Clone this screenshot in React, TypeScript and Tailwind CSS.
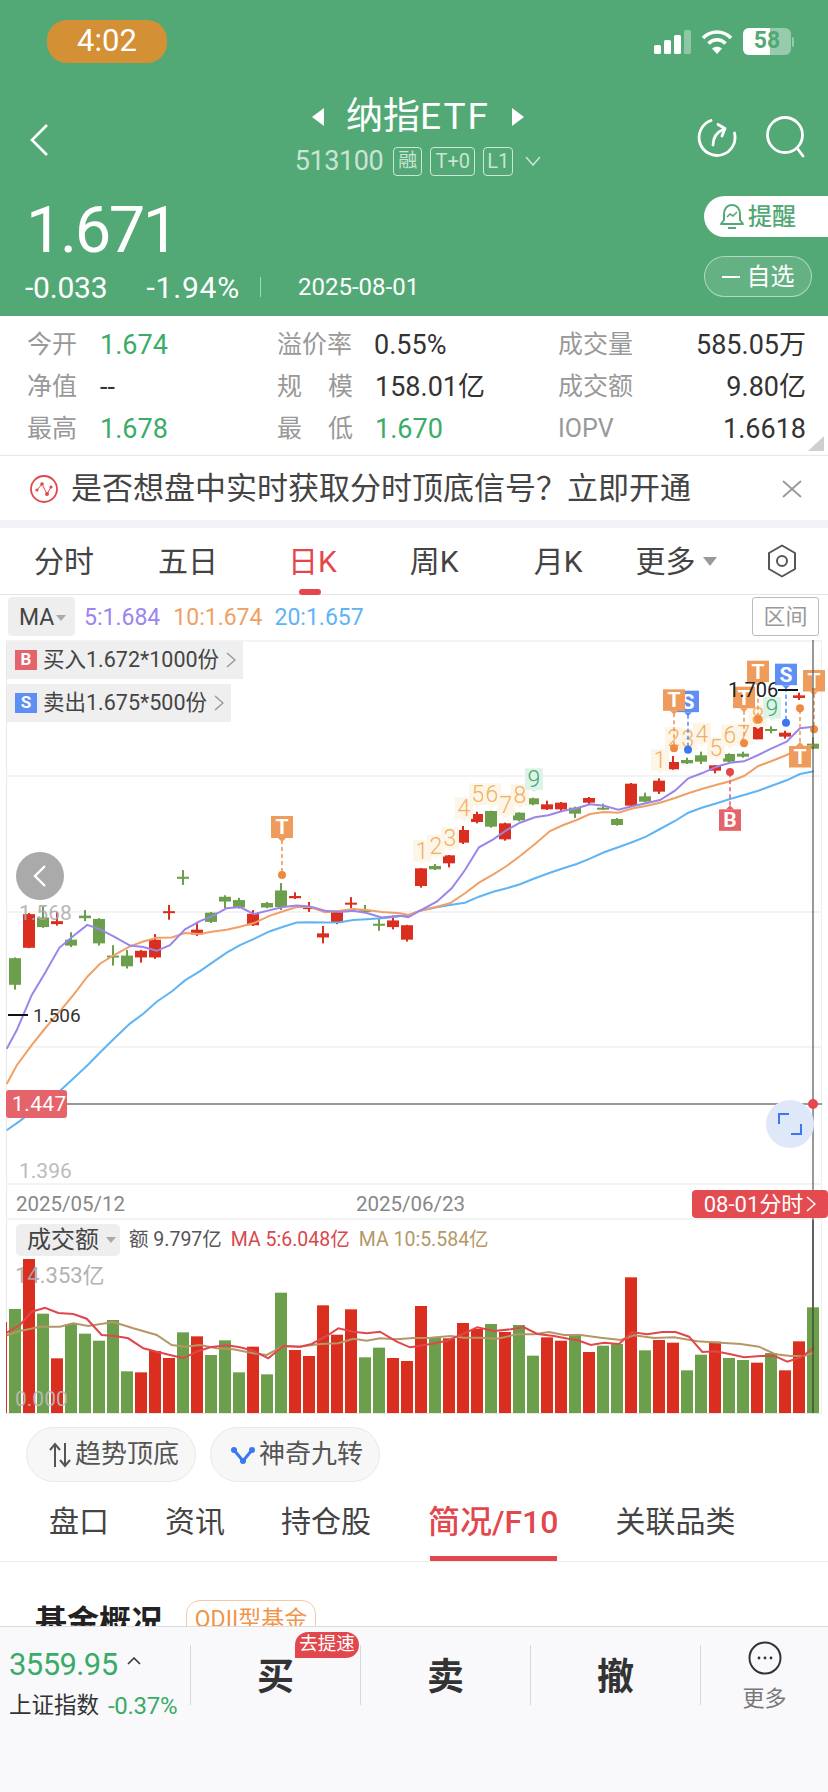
import React from "react";

const RED = "#da2e1f";
const GREEN = "#6c9f4b";

// zoomed-crop readings -> page coordinates
const leftX = (x: number) => x / 3;
const leftY = (y: number) => 640 + y / 2.703;
const rightX = (x: number) => 400 + x / 3;
const rightY = (y: number) => 640 + y / 3;
const line = (pts: number[][]) => pts.map((p) => p[0].toFixed(1) + "," + p[1].toFixed(1)).join(" ");

// [bodyTop, bodyBottom, wickTop, wickBottom, isRed]
const leftCandles: number[][] = [
  [860, 932, 858, 945, 0], [741, 832, 738, 833, 1], [750, 776, 720, 778, 0], [760, 768, 735, 772, 1],
  [810, 826, 790, 830, 0], [745, 752, 730, 760, 0], [754, 820, 752, 826, 0], [853, 858, 825, 880, 0],
  [853, 882, 838, 888, 0], [840, 858, 838, 872, 1], [810, 858, 795, 862, 1], [733, 737, 716, 756, 1],
  [640, 645, 622, 662, 0], [783, 796, 762, 800, 1], [737, 762, 735, 765, 0], [694, 707, 690, 725, 0],
  [703, 723, 697, 726, 0], [740, 771, 730, 773, 1], [711, 723, 708, 725, 0], [677, 722, 657, 730, 0],
  [692, 698, 682, 700, 1], [722, 727, 708, 735, 1], [793, 804, 773, 820, 1], [735, 765, 730, 768, 1],
  [710, 714, 695, 725, 1], [730, 735, 716, 738, 0], [767, 772, 752, 786, 0], [758, 776, 745, 782, 1],
  [771, 810, 770, 815, 1],
];
const rightCandles: number[][] = [
  [685, 738, 684, 743, 1], [678, 688, 672, 690, 0], [646, 670, 645, 682, 1], [570, 608, 558, 612, 1],
  [522, 546, 515, 550, 1], [513, 560, 512, 563, 0], [550, 598, 548, 602, 1], [518, 541, 517, 544, 0],
  [475, 493, 473, 496, 0], [493, 508, 482, 510, 1], [488, 508, 486, 513, 1], [503, 521, 500, 534, 0],
  [474, 488, 471, 492, 1], [503, 508, 491, 510, 0], [537, 555, 534, 557, 0], [431, 497, 429, 498, 1],
  [469, 485, 458, 487, 0], [422, 455, 415, 462, 1], [366, 388, 348, 389, 1], [360, 370, 353, 372, 0],
  [346, 365, 335, 372, 0], [376, 392, 375, 400, 1], [342, 365, 340, 367, 0], [341, 350, 335, 353, 0],
  [261, 298, 261, 298, 1], [267, 271, 259, 280, 0], [278, 290, 272, 296, 1], [166, 174, 158, 180, 1],
  [311, 326, 292, 328, 0],
];

const ma5 = line([
  ...[[20,1105],[50,1055],[95,960],[135,900],[178,832],[220,800],[262,770],[300,782],[345,803],[390,826],[430,830],[470,840],[510,825],[555,782],[600,760],[640,745],[680,725],[720,722],[762,741],[810,730],[850,722],[890,718],[930,720],[975,732],[1020,735],[1060,732],[1100,738],[1145,750],[1190,746]].map((p) => [leftX(p[0]), leftY(p[1])]),
  ...[[0,827],[25,832],[60,812],[110,785],[155,745],[195,690],[237,622],[280,598],[320,570],[360,548],[405,532],[445,526],[490,512],[530,505],[570,493],[612,497],[655,509],[700,498],[738,490],[780,480],[825,452],[865,415],[905,400],[950,380],[990,368],[1032,364],[1075,345],[1115,325],[1160,305],[1200,265],[1242,260]].map((p) => [rightX(p[0]), rightY(p[1])]),
]);
const ma10 = line([
  ...[[20,1200],[50,1150],[95,1095],[135,1050],[178,1005],[220,960],[262,910],[300,875],[345,850],[390,828],[430,815],[470,805],[515,804],[555,792],[600,795],[640,788],[680,783],[720,775],[762,765],[810,745],[850,733],[890,722],[930,722],[975,736],[1020,732],[1060,727],[1100,730],[1145,735],[1190,738]].map((p) => [leftX(p[0]), leftY(p[1])]),
  ...[[0,820],[25,825],[60,812],[110,800],[150,790],[195,760],[237,728],[280,703],[320,678],[360,648],[405,612],[450,573],[490,555],[530,540],[570,522],[612,516],[655,518],[700,505],[738,498],[780,488],[825,474],[865,460],[905,447],[950,434],[990,424],[1032,408],[1075,378],[1115,363],[1160,345],[1200,325],[1242,315]].map((p) => [rightX(p[0]), rightY(p[1])]),
]);
const ma20 = line([
  ...[[20,1325],[60,1300],[95,1275],[135,1245],[178,1220],[220,1185],[262,1150],[300,1115],[345,1075],[390,1037],[430,1010],[470,978],[515,950],[555,920],[600,895],[640,870],[680,845],[720,825],[762,808],[810,787],[850,775],[890,764],[930,763],[975,764],[1020,763],[1060,757],[1100,755],[1145,752],[1190,748]].map((p) => [leftX(p[0]), leftY(p[1])]),
  ...[[0,828],[25,827],[60,812],[110,802],[150,795],[195,788],[237,770],[280,755],[320,745],[360,733],[405,715],[450,698],[490,685],[530,672],[570,656],[612,637],[655,622],[700,605],[738,590],[780,567],[825,543],[865,518],[905,503],[950,490],[990,477],[1032,465],[1075,452],[1115,437],[1160,421],[1200,402],[1242,394]].map((p) => [rightX(p[0]), rightY(p[1])]),
]);

// [top in crop, isRed]
const volumes: number[][] = [
  [327,0],[177,1],[341,0],[475,1],[372,0],[401,0],[422,0],[360,0],[514,0],[517,1],[453,1],[474,1],[397,0],[409,1],[465,0],[421,0],[517,0],[440,1],[523,0],[278,0],[450,1],[468,1],[316,1],[404,1],[328,1],[472,0],[443,0],[474,1],[483,1],
  [318,1],[412,0],[415,1],[369,1],[387,1],[372,0],[396,1],[375,0],[467,0],[412,1],[422,1],[403,0],[456,1],[437,0],[432,0],[232,1],[451,0],[420,1],[428,1],[511,0],[464,0],[425,1],[474,0],[480,0],[488,1],[459,0],[511,1],[424,1],[322,0],
];
const volLine = (a: number[][], b: number[][]) =>
  line([...a.map((p) => [p[0] / 3, 1200 + p[1] / 3]), ...b.map((p) => [414 + p[0] / 3, 1200 + p[1] / 3])]);
const volMa5 = volLine(
  [[20,398],[60,375],[95,335],[135,323],[175,339],[220,342],[260,356],[305,405],[345,408],[385,415],[430,445],[470,455],[510,465],[550,475],[590,455],[630,442],[680,436],[720,442],[760,452],[805,475],[850,438],[900,440],[935,432],[985,405],[1015,385],[1060,395],[1100,400],[1140,395],[1190,425],[1230,442]],
  [[0,440],[50,432],[100,422],[150,400],[190,382],[240,393],[290,388],[330,382],[370,402],[420,408],[470,418],[490,420],[530,435],[570,428],[615,432],[655,397],[700,403],[745,396],[785,396],[825,410],[865,456],[905,454],[950,463],[990,472],[1040,468],[1080,467],[1120,485],[1160,472],[1200,443]]
);
const volMa10 = volLine(
  [[20,406],[60,393],[120,380],[180,380],[220,370],[265,378],[340,366],[400,385],[470,405],[515,435],[555,440],[600,435],[650,445],[700,448],[760,460],[800,465],[850,438],[900,440],[960,432],[1015,430],[1060,416],[1100,422],[1140,415],[1190,418],[1240,414]],
  [[50,413],[110,408],[150,413],[200,413],[250,416],[310,403],[360,403],[405,396],[450,405],[500,405],[560,413],[620,420],[660,406],[720,414],[780,412],[850,424],[920,428],[980,432],[1035,440],[1085,463],[1130,468],[1170,468],[1200,458]]
);

// TD sequence labels: crop x, box top, digit
const seqLabels: number[][] = [
  [66,600,1],[108,585,2],[150,562,3],[192,472,4],[234,430,5],[276,430,6],[318,462,7],[360,433,8],[402,385,9],
  [780,328,1],[822,262,2],[864,265,3],[906,248,4],[948,291,5],[990,253,6],[1032,250,7],[1074,195,8],[1116,171,9],
];

function Marker({ zx, top, dot, letter, down }: { zx: number; top: number; dot: number; letter: string; down?: boolean }) {
  const fill = letter === "T" ? "#ee9b5b" : letter === "S" ? "#5e8ff5" : "#e5636a";
  const dotFill = letter === "T" ? "#ee8a3f" : letter === "S" ? "#3b78f0" : "#e2474d";
  const x = rightX(zx);
  const y = rightY(top);
  const dy = rightY(dot);
  return (
    <g>
      <line x1={x} x2={x} y1={y + 10} y2={dy} stroke={fill} strokeWidth="2" strokeDasharray="4 3" opacity="0.8" />
      <circle cx={x} cy={dy} r="4" fill={dotFill} />
      <rect x={x - 11} y={y} width="22" height="21.5" fill={fill} />
      {down ? (
        <polygon points={`${x - 4},${y} ${x + 4},${y} ${x},${y - 4}`} fill={fill} />
      ) : (
        <polygon points={`${x - 4},${y + 21.5} ${x + 4},${y + 21.5} ${x},${y + 25.5}`} fill={fill} />
      )}
      <text x={x} y={y + 18} textAnchor="middle" fontSize="21" fontWeight="700" fill="#fff">{letter}</text>
    </g>
  );
}

function Candle({ x, c, toY }: { x: number; c: number[]; toY: (y: number) => number }) {
  const color = c[4] ? RED : GREEN;
  const top = toY(c[0]);
  return (
    <g>
      <rect x={x - 1} y={toY(c[2])} width="2" height={toY(c[3]) - toY(c[2])} fill={color} />
      <rect x={x - 6} y={top} width="12" height={Math.max(toY(c[1]) - top, 2)} fill={color} />
    </g>
  );
}

function KChart() {
  return (
    <svg className="absolute inset-0" width="828" height="782" viewBox="0 638 828 782">
      {/* frame and grid */}
      <rect x="6" y="640" width="1" height="773" fill="#e8e8e8" />
      <rect x="821" y="640" width="1" height="773" fill="#eeeeee" />
      {[641, 776, 912, 1047, 1184, 1219].map((y) => (
        <rect key={y} x="6" y={y - 1} width="816" height="2" fill="#f3f3f3" />
      ))}
      <rect x="6" y="1413" width="816" height="1" fill="#e8e8e8" />

      {leftCandles.map((c, i) => <Candle key={i} x={15 + 14 * i} c={c} toY={leftY} />)}
      {rightCandles.map((c, i) => <Candle key={i} x={15 + 14 * (i + 29)} c={c} toY={rightY} />)}

      <polyline points={ma20} fill="none" stroke="#5eb4f4" strokeWidth="2" />
      <polyline points={ma10} fill="none" stroke="#f0a066" strokeWidth="2" />
      <polyline points={ma5} fill="none" stroke="#9b85ec" strokeWidth="2" />

      {/* axis labels */}
      <text x="19" y="920" fontSize="21" fill="#aaaaaa" opacity="0.85">1.568</text>
      <text x="19" y="1178" fontSize="21" fill="#bbbbbb">1.396</text>
      <rect x="8" y="1014" width="20" height="2" fill="#111" />
      <text x="33" y="1022" fontSize="19" fill="#333">1.506</text>
      <text x="16" y="1211" fontSize="20.500" fill="#888">2025/05/12</text>
      <text x="356" y="1211" fontSize="20.500" fill="#888">2025/06/23</text>

      {/* sequence labels */}
      {seqLabels.map((s, i) => {
        const x = rightX(s[0]);
        const y = rightY(s[1]);
        const nine = s[2] === 9;
        return (
          <g key={i}>
            <rect x={x - 9} y={y} width="18" height="21.5" fill={nine ? "#dff2e8" : "#fdf5e8"} />
            <polygon points={`${x - 3},${y + 21.5} ${x + 3},${y + 21.5} ${x},${y + 24}`} fill={nine ? "#dff2e8" : "#fdf5e8"} />
            <text x={x} y={y + 19} textAnchor="middle" fontSize="23" fontWeight="300" fill={nine ? "#3bab68" : "#f0b060"}>{s[2]}</text>
          </g>
        );
      })}

      {/* trade marks */}
      <g>
        <line x1="282" x2="282" y1="840" y2="872" stroke="#ee9b5b" strokeWidth="2" strokeDasharray="4 3" opacity="0.8" />
        <circle cx="282" cy="875" r="4" fill="#ee8a3f" />
        <rect x="271" y="816" width="22" height="22" fill="#ee9b5b" />
        <polygon points="278,838 286,838 282,842" fill="#ee9b5b" />
        <text x="282" y="834" textAnchor="middle" fontSize="21" fontWeight="700" fill="#fff">T</text>
      </g>
      <Marker zx={864} top={152} dot={329} letter="S" />
      <Marker zx={822} top={148} dot={325} letter="T" />
      <Marker zx={1032} top={140} dot={310} letter="T" />
      <Marker zx={1074} top={62} dot={238} letter="T" />
      <Marker zx={1158} top={71} dot={248} letter="S" />
      <Marker zx={1242} top={90} dot={268} letter="T" />
      <Marker zx={1200} top={318} dot={205} letter="T" down />
      <Marker zx={990} top={508} dot={396} letter="B" down />
      <text x="728" y="697" fontSize="20" fill="#222">1.706</text>
      <rect x="778" y="689" width="20" height="2" fill="#111" />

      {/* crosshair */}
      <rect x="6" y="1103" width="816" height="2" fill="#999" />
      <rect x="812" y="640" width="2" height="773" fill="#555" opacity="0.6" />
      <circle cx="813" cy="1104" r="5" fill="#e5474c" />
      <rect x="6" y="1090" width="61" height="28" rx="3" fill="#e5636a" />
      <text x="12" y="1111" fontSize="21" fill="#fff" letterSpacing="0.4">1.447</text>

      {/* volume */}
      <rect x="6" y="1322" width="1" height="91" fill={RED} />
      {volumes.map((v, i) => {
        const top = 1200 + v[0] / 3;
        return <rect key={i} x={9 + 14 * i} y={top} width="12" height={1413 - top} fill={v[1] ? RED : GREEN} />;
      })}
      <polyline points={volMa10} fill="none" stroke="#b59767" strokeWidth="2" />
      <polyline points={volMa5} fill="none" stroke="#e0474c" strokeWidth="2" />
      <text x="15" y="1283" fontSize="22" fill="#aaaaaa" opacity="0.9">14.353亿</text>
      <text x="15" y="1406" fontSize="21" fill="#bbbbbb" opacity="0.9">0.000</text>
      <rect x="812" y="1220" width="2" height="193" fill="#333" opacity="0.55" />
    </svg>
  );
}

function TradeTag({ letter, color, text, width }: { letter: string; color: string; text: string; width: string }) {
  return (
    <div className={`h-[38px] flex items-center pl-2 bg-[#efefef] ${width}`}>
      <span className="w-[22px] h-[20px] flex items-center justify-center text-white text-[17px] font-bold" style={{ background: color }}>{letter}</span>
      <span className="ml-[6px] text-[21.500px] text-[#444] whitespace-nowrap">{text}</span>
      <svg className="ml-[7px] shrink-0" width="10" height="16" viewBox="0 0 10 16" fill="none" stroke="#999" strokeWidth="1.5">
        <path d="M1 1l8 7-8 7" />
      </svg>
    </div>
  );
}

function Stat({ label, value, valueClass, width }: { label: string[]; value: string; valueClass: string; width: string }) {
  return (
    <div className={`flex items-center ${width}`}>
      <span className={`text-[25px] text-[#999] flex ${label.length > 1 ? "w-[76px] justify-between" : ""}`}>
        {label.map((l) => <span key={l}>{l}</span>)}
      </span>
      <span className={`text-[27px] ${valueClass}`}>{value}</span>
    </div>
  );
}

function StatusBar() {
  return (
    <div className="h-[43px] mt-[20px] flex items-center justify-between pl-[47px] pr-[34px]">
      <div className="w-[120px] h-[43px] rounded-[20px] bg-[#d39035] text-white text-[31px] flex items-center justify-center">4:02</div>
      <div className="flex items-center">
        <svg width="37" height="24" viewBox="0 0 37 24" fill="#fff">
          <rect x="0" y="15" width="7" height="9" rx="1.5" />
          <rect x="10" y="10" width="7" height="14" rx="1.5" />
          <rect x="20" y="5" width="7" height="19" rx="1.5" />
          <rect x="30" y="0" width="7" height="24" rx="1.5" opacity="0.35" />
        </svg>
        <svg className="ml-[10px]" width="32" height="25" viewBox="0 0 32 25" fill="none" stroke="#fff" strokeWidth="3.6">
          <path d="M2 9c8-8 20-8 28 0" />
          <path d="M7.5 14.5c5-5 12-5 17 0" />
          <path d="M16 25l-5-5.500c3-2.500 7-2.500 10 0z" fill="#fff" stroke="none" />
        </svg>
        <div className="ml-[10px] w-[48px] h-[27px] rounded-[6px] bg-white/40 relative overflow-hidden">
          <div className="w-[27px] h-full bg-white" />
          <span className="absolute inset-0 flex items-center justify-center text-[#53a976] text-[23px] font-bold">58</span>
        </div>
        <div className="ml-[1px] w-[2px] h-[10px] rounded-r-sm bg-white/40" />
      </div>
    </div>
  );
}

function Header() {
  return (
    <div className="h-[316px] bg-[#53a976] text-white shrink-0">
      <StatusBar />
      <div className="mt-[33px] h-[82px] grid grid-cols-[1fr_auto_1fr] items-center pl-[30px] pr-[22px]">
        <svg className="mt-[5px]" width="18" height="32" viewBox="0 0 18 32" fill="none" stroke="#fff" strokeWidth="2.6">
          <path d="M17 1L2 16l15 15" />
        </svg>
        <div className="flex flex-col items-center">
          <div className="flex items-center h-[40px]">
            <span className="w-0 h-0 border-y-[9px] border-y-transparent border-r-[12px] border-r-white" />
            <span className="mx-[22px] text-[37px] leading-[40px] whitespace-nowrap">纳指<span className="tracking-[2px]">ETF</span></span>
            <span className="w-0 h-0 border-y-[9px] border-y-transparent border-l-[12px] border-l-white" />
          </div>
          <div className="flex items-center h-[32px] mt-[8px] text-white/70">
            <span className="text-[27px] tracking-[-0.4px]">513100</span>
            <span className="ml-[10px] w-[29px] h-[29px] border border-white/70 rounded-[4px] text-[19px] flex items-center justify-center">融</span>
            <span className="ml-[8px] w-[45px] h-[29px] border border-white/70 rounded-[4px] text-[20px] flex items-center justify-center">T+0</span>
            <span className="ml-[8px] w-[30px] h-[29px] border border-white/70 rounded-[4px] text-[20px] flex items-center justify-center">L1</span>
            <svg className="ml-[12px]" width="16" height="10" viewBox="0 0 16 10" fill="none" stroke="currentColor" strokeWidth="1.5">
              <path d="M1 1l7 8 7-8" />
            </svg>
          </div>
        </div>
        <div className="flex items-center gap-[29px] justify-self-end">
          <svg width="40" height="40" viewBox="0 0 40 40" fill="none" stroke="#fff" strokeWidth="2.8" strokeLinecap="round">
            <path d="M14 3.500A18 18 0 1 0 37.500 16" />
            <path d="M16 28c0-8 4-13 11-16" />
            <path d="M21 7.500l7 4-3 7.500" strokeLinejoin="round" />
          </svg>
          <svg width="40" height="44" viewBox="0 0 40 44" fill="none" stroke="#fff" strokeWidth="2.8" strokeLinecap="round">
            <circle cx="19" cy="20" r="17.500" />
            <path d="M31 33l6 8" />
          </svg>
        </div>
      </div>
      <div className="flex justify-between">
        <div className="pl-[25px]">
          <div className="mt-[21px] text-[65px] leading-[62px] tracking-[-2.500px] pl-[1px]">1.671</div>
          <div className="mt-[11px] h-[30px] flex items-center">
            <span className="text-[30px] tracking-[-0.2px]">-0.033</span>
            <span className="ml-[39px] text-[30px] tracking-[0.8px]">-1.94%</span>
            <span className="ml-[20px] w-[1px] h-[20px] bg-white/50" />
            <span className="ml-[37px] text-[24px]">2025-08-01</span>
          </div>
        </div>
        <div className="w-[124px] pt-[18px] shrink-0">
          <div className="h-[41px] bg-white rounded-l-full flex items-center pl-[16px] text-[#53a976]">
            <svg width="24" height="30" viewBox="0 0 24 30" fill="none" stroke="currentColor" strokeWidth="2">
              <path d="M12 3c-5 0-8 4-8 9v6l-3 4h22l-3-4v-6c0-5-3-9-8-9z" strokeLinejoin="round" />
              <path d="M7 15l3-3 3 2 4-4" strokeWidth="1.6" />
              <path d="M8 26h8" />
            </svg>
            <span className="ml-[4px] text-[24px] font-medium">提醒</span>
          </div>
          <div className="mt-[19px] w-[108px] h-[41px] border border-white/50 bg-white/10 rounded-full flex items-center justify-center text-[24px]">
            <span className="w-[18px] h-[2px] bg-white mr-[7px]" />自选
          </div>
        </div>
      </div>
    </div>
  );
}

function Stats() {
  return (
    <div className="h-[140px] border-b border-[#e8e8e8] pl-[27px] pr-[22px] pt-[8px] relative shrink-0">
      <div className="h-[42px] flex items-center">
        <Stat width="w-[250px]" label={["今开"]} value="1.674" valueClass="ml-[23px] text-[#3bab68]" />
        <Stat width="w-[281px]" label={["溢价率"]} value="0.55%" valueClass="ml-[22px] text-[#333]" />
        <div className="flex-1 flex justify-between items-center">
          <span className="text-[25px] text-[#999]">成交量</span>
          <span className="text-[27px] text-[#333]">585.05万</span>
        </div>
      </div>
      <div className="h-[42px] flex items-center">
        <Stat width="w-[250px]" label={["净值"]} value="--" valueClass="ml-[23px] text-[#333]" />
        <Stat width="w-[281px]" label={["规", "模"]} value="158.01亿" valueClass="ml-[22px] text-[#333]" />
        <div className="flex-1 flex justify-between items-center">
          <span className="text-[25px] text-[#999]">成交额</span>
          <span className="text-[27px] text-[#333]">9.80亿</span>
        </div>
      </div>
      <div className="h-[42px] flex items-center">
        <Stat width="w-[250px]" label={["最高"]} value="1.678" valueClass="ml-[23px] text-[#3bab68]" />
        <Stat width="w-[281px]" label={["最", "低"]} value="1.670" valueClass="ml-[22px] text-[#3bab68]" />
        <div className="flex-1 flex justify-between items-center">
          <span className="text-[25px] text-[#999]">IOPV</span>
          <span className="text-[27px] text-[#333]">1.6618</span>
        </div>
      </div>
      <span className="absolute right-[4px] bottom-[4px] w-0 h-0 border-l-[16px] border-l-transparent border-b-[15px] border-b-[#cfcfcf]" />
    </div>
  );
}

function Banner() {
  return (
    <div className="h-[64px] flex items-center pl-[30px] pr-[26px] pt-[2px] shrink-0">
      <svg width="28" height="28" viewBox="0 0 28 28" fill="none">
        <circle cx="14" cy="14" r="13" stroke="#e2474d" strokeWidth="1.8" />
        <path d="M7 15l5-6 5 10 4-7" stroke="#e2474d" strokeWidth="1" />
        <circle cx="7" cy="15" r="1.600" fill="#e2474d" />
        <circle cx="12" cy="9" r="1.800" fill="#e2474d" />
        <circle cx="17" cy="19" r="2" fill="#e2474d" />
        <circle cx="21" cy="12" r="1.600" fill="#e2474d" />
      </svg>
      <span className="ml-[13px] text-[31px] text-[#444] whitespace-nowrap">是否想盘中实时获取分时顶底信号？立即开通</span>
      <svg className="ml-auto" width="20" height="18" viewBox="0 0 20 18" fill="none" stroke="#999" strokeWidth="1.8">
        <path d="M1 1l18 16M19 1L1 17" />
      </svg>
    </div>
  );
}

function PeriodTabs() {
  return (
    <div className="h-[67px] border-b border-[#e4e4e4] flex items-center text-[30px] text-[#444] shrink-0">
      <span className="ml-[34px]">分时</span>
      <span className="ml-[64px]">五日</span>
      <span className="ml-[70px] text-[#e2474d] relative">
        日K
        <span className="absolute left-[11px] top-[50px] w-[22px] h-[6px] rounded-full bg-[#e2474d]" />
      </span>
      <span className="ml-[73px]">周K</span>
      <span className="ml-[75px]">月K</span>
      <span className="ml-[53px]">更多</span>
      <span className="ml-[8px] w-0 h-0 border-x-[7px] border-x-transparent border-t-[9px] border-t-[#999]" />
      <svg className="ml-[50px]" width="30" height="34" viewBox="0 0 30 34" fill="none" stroke="#555" strokeWidth="2">
        <path d="M15 1.500l13 7.500v16l-13 7.500-13-7.500v-16z" strokeLinejoin="round" />
        <circle cx="15" cy="17" r="5" />
      </svg>
    </div>
  );
}

function MaRow() {
  return (
    <div className="h-[43px] flex items-center pl-[8px] pr-[9px] shrink-0">
      <div className="w-[67px] h-[39px] bg-[#eeeeee] rounded-[4px] flex items-center pl-[11px] pt-[3px] text-[23px] text-[#444]">
        MA
        <span className="ml-[2px] w-0 h-0 border-x-[5px] border-x-transparent border-t-[6px] border-t-[#aaa]" />
      </div>
      <span className="ml-[9px] pt-[3px] text-[23px] text-[#9b85ec]">5:1.684</span>
      <span className="ml-[13px] pt-[3px] text-[23px] text-[#f0a066]">10:1.674</span>
      <span className="ml-[12px] pt-[3px] text-[23px] text-[#5eb4f4]">20:1.657</span>
      <span className="ml-auto w-[67px] h-[39px] border border-[#bbb] rounded-[3px] text-[22px] text-[#999] flex items-center justify-center">区间</span>
    </div>
  );
}

function ChartArea() {
  return (
    <div className="h-[782px] relative shrink-0">
      <KChart />
      <div className="absolute left-[7px] top-[3px]">
        <TradeTag letter="B" color="#e5636a" text="买入1.672*1000份" width="w-[236px]" />
      </div>
      <div className="absolute left-[7px] top-[46px]">
        <TradeTag letter="S" color="#5e8ff5" text="卖出1.675*500份" width="w-[224px]" />
      </div>
      <div className="absolute left-[16px] top-[214px] w-[48px] h-[48px] rounded-full bg-[#aaaaaa] flex items-center justify-center">
        <svg width="14" height="24" viewBox="0 0 14 24" fill="none" stroke="#fff" strokeWidth="2.4">
          <path d="M12 2L2 12l10 10" />
        </svg>
      </div>
      <div className="absolute left-[766px] top-[462px] w-[48px] h-[48px] rounded-full bg-[#dfe8f9] flex items-center justify-center">
        <svg width="24" height="22" viewBox="0 0 24 22" fill="none" stroke="#3b78f0" strokeWidth="2">
          <path d="M1 11V1h10M23 11v10H13" />
        </svg>
      </div>
      <div className="absolute left-[692px] top-[552px] w-[136px] h-[28px] rounded-[4px] bg-[#e34b50] text-white text-[22px] flex items-center justify-center whitespace-nowrap">
        08-01分时
        <svg className="ml-[3px]" width="10" height="16" viewBox="0 0 10 16" fill="none" stroke="#fff" strokeWidth="1.500">
          <path d="M1 1l8 7-8 7" />
        </svg>
      </div>
      <div className="absolute left-[16px] top-[586px] flex items-center">
        <div className="w-[104px] h-[32px] bg-[#eeeeee] rounded-[5px] flex items-center pl-[11px] text-[24px] leading-none text-[#444]">
          成交额
          <span className="ml-[7px] w-0 h-0 border-x-[5px] border-x-transparent border-t-[6px] border-t-[#aaa]" />
        </div>
        <span className="ml-[9px] text-[19.500px] text-[#555] whitespace-nowrap">额 9.797亿</span>
        <span className="ml-[9px] text-[19.500px] text-[#d9474c] whitespace-nowrap">MA 5:6.048亿</span>
        <span className="ml-[9px] text-[19.500px] text-[#b59767] whitespace-nowrap">MA 10:5.584亿</span>
      </div>
    </div>
  );
}

function Chips() {
  return (
    <div className="pt-[7px] pl-[26px] flex gap-[14px] shrink-0">
      <div className="w-[170px] h-[55px] rounded-full bg-[#f7f7f7] border border-[#e8e8e8] flex items-center pl-[21px] text-[26px] text-[#555]">
        <svg width="24" height="26" viewBox="0 0 24 26" fill="none" stroke="#555" strokeWidth="2">
          <path d="M7 25V3M2 8l5-6 5 6" />
          <path d="M17 1v22M12 18l5 6 5-6" />
        </svg>
        <span className="ml-[3px]">趋势顶底</span>
      </div>
      <div className="w-[170px] h-[55px] rounded-full bg-[#f7f7f7] border border-[#e8e8e8] flex items-center pl-[20px] text-[26px] text-[#555]">
        <svg width="24" height="18" viewBox="0 0 24 18" fill="none" stroke="#3b78f0" strokeWidth="3">
          <path d="M3 4l9 11 9-11" />
          <circle cx="3" cy="4" r="3" fill="#3b78f0" stroke="none" />
          <circle cx="21" cy="4" r="3" fill="#3b78f0" stroke="none" />
          <circle cx="12" cy="15" r="3" fill="#3b78f0" stroke="none" />
        </svg>
        <span className="ml-[4px]">神奇九转</span>
      </div>
    </div>
  );
}

function DetailTabs() {
  return (
    <div className="h-[80px] border-b border-[#ececec] flex items-center text-[30px] text-[#444] shrink-0">
      <span className="ml-[49px]">盘口</span>
      <span className="ml-[56px]">资讯</span>
      <span className="ml-[56px]">持仓股</span>
      <span className="ml-[57px] text-[32px] font-medium text-[#e2474d] relative whitespace-nowrap">
        简况/F10
        <span className="absolute left-[2px] right-[2px] top-[58px] h-[5px] bg-[#e2474d]" />
      </span>
      <span className="ml-[57px]">关联品类</span>
    </div>
  );
}

function BottomBar() {
  return (
    <div className="h-[166px] bg-[#f9f9fc] border-t border-[#dddddd] flex items-start shrink-0 relative">
      <div className="w-[190px] pl-[9px] pt-[20px]">
        <div className="flex items-center text-[#3bab68] text-[31px] leading-[36px] tracking-[-0.6px]">
          3559.95
          <svg className="ml-[9px] mb-[8px]" width="14" height="8" viewBox="0 0 14 8" fill="none" stroke="#333" strokeWidth="1.5">
            <path d="M1 7l6-6 6 6" />
          </svg>
        </div>
        <div className="flex items-center mt-[5px] whitespace-nowrap">
          <span className="text-[22.500px] text-[#333]">上证指数</span>
          <span className="ml-[9px] text-[24px] text-[#3bab68] tracking-[-0.3px]">-0.37%</span>
        </div>
      </div>
      {["买", "卖", "撤"].map((t) => (
        <div key={t} className="mt-[18px] w-[170px] h-[60px] border-l border-[#d8d8d8] flex items-center justify-center pt-[6px] text-[37px] font-bold text-[#333]">
          {t}
        </div>
      ))}
      <div className="mt-[18px] flex-1 h-[60px] border-l border-[#d8d8d8] flex flex-col items-center">
        <svg className="-mt-[4px] shrink-0" width="34" height="34" viewBox="0 0 34 34" fill="none" stroke="#333" strokeWidth="2">
          <circle cx="17" cy="17" r="15.500" />
          <circle cx="11" cy="17" r="1.400" fill="#333" stroke="none" />
          <circle cx="17" cy="17" r="1.400" fill="#333" stroke="none" />
          <circle cx="23" cy="17" r="1.400" fill="#333" stroke="none" />
        </svg>
        <span className="mt-[9px] text-[22px] leading-[30px] text-[#777] whitespace-nowrap">更多</span>
      </div>
      <span className="absolute left-[295px] top-[5px] w-[64px] h-[26px] bg-[#e2474d] rounded-t-[13px] rounded-br-[13px] text-white text-[18.500px] flex items-center justify-center whitespace-nowrap">去提速</span>
    </div>
  );
}

export default function App() {
  return (
    <div className="w-[828px] h-[1792px] overflow-hidden bg-white flex flex-col font-[Roboto,'Noto_Sans_CJK_SC',sans-serif]">
      <Header />
      <Stats />
      <Banner />
      <div className="h-[8px] bg-[#f2f3f7] shrink-0" />
      <PeriodTabs />
      <MaRow />
      <ChartArea />
      <Chips />
      <DetailTabs />
      <div className="flex-1 overflow-hidden pl-[35px] pt-[38px] flex items-start">
        <span className="text-[32px] leading-[44px] font-bold text-[#222]">基金概况</span>
        <span className="ml-[23px] w-[130px] h-[40px] border border-[#f6c9a4] rounded-[14px] text-[23px] text-[#f0944a] flex items-center justify-center">QDII型基金</span>
      </div>
      <BottomBar />
    </div>
  );
}
